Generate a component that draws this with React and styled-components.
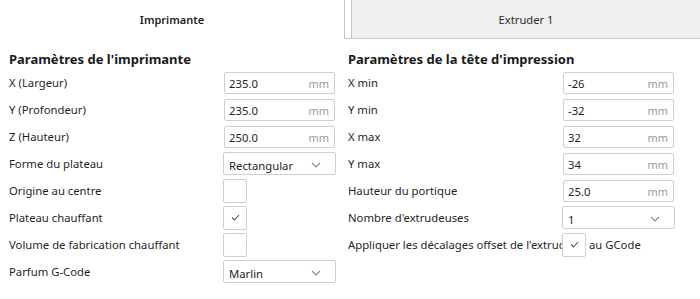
import React from "react";
import styled, { createGlobalStyle } from "styled-components";

const Global = createGlobalStyle`
  html, body {
    margin: 0;
    padding: 0;
    background: #ffffff;
  }
  body {
    font-family: "Noto Sans", "Open Sans", sans-serif;
    color: #1f1f1f;
    width: 700px;
    height: 299px;
    overflow: hidden;
  }
`;

function Chevron() {
  return (
    <svg width="10" height="6" viewBox="0 0 10 6">
      <path d="M1 1 L5 5 L9 1" fill="none" stroke="#8a8a8a" strokeWidth="1.1" />
    </svg>
  );
}

function Check() {
  return (
    <svg width="9" height="7" viewBox="0 0 9 7">
      <path d="M1 3.5 L3.5 6 L8 1" fill="none" stroke="#555" strokeWidth="1.1" />
    </svg>
  );
}

function Field({ value, unit = "mm" }) {
  return (
    <TextBox>
      <Value>{value}</Value>
      <Unit>{unit}</Unit>
    </TextBox>
  );
}

function Select({ value }) {
  return (
    <SelectBox>
      <Value>{value}</Value>
      <Chevron />
    </SelectBox>
  );
}

function Checkbox({ checked }) {
  return <CheckBox>{checked && <Check />}</CheckBox>;
}

const printerRows = [
  ["X (Largeur)", <Field value="235.0" />],
  ["Y (Profondeur)", <Field value="235.0" />],
  ["Z (Hauteur)", <Field value="250.0" />],
  ["Forme du plateau", <Select value="Rectangular" />],
  ["Origine au centre", <Checkbox />],
  ["Plateau chauffant", <Checkbox checked />],
  ["Volume de fabrication chauffant", <Checkbox />],
  ["Parfum G-Code", <Select value="Marlin" />],
];

const headRows = [
  ["X min", <Field value="-26" />],
  ["Y min", <Field value="-32" />],
  ["X max", <Field value="32" />],
  ["Y max", <Field value="34" />],
  ["Hauteur du portique", <Field value="25.0" />],
  ["Nombre d'extrudeuses", <Select value="1" />],
];

export default function App() {
  return (
    <>
      <Global />
      <Page>
        <Tabs>
          <ActiveTab>Imprimante</ActiveTab>
          <TabGap />
          <Tab>Extruder 1</Tab>
        </Tabs>
        <Columns>
          <Column>
            <Heading>Paramètres de l'imprimante</Heading>
            {printerRows.map(([label, control]) => (
              <Row key={label}>
                <Label>{label}</Label>
                {control}
              </Row>
            ))}
          </Column>
          <Column>
            <Heading>Paramètres de la tête d'impression</Heading>
            {headRows.map(([label, control]) => (
              <Row key={label}>
                <Label>{label}</Label>
                {control}
              </Row>
            ))}
            <Row>
              <Label>Appliquer les décalages offset de l'extrudeuse</Label>
              <Checkbox checked />
              <After>au GCode</After>
            </Row>
          </Column>
        </Columns>
      </Page>
    </>
  );
}

const Page = styled.div`
  width: 700px;
  height: 299px;
  display: flex;
  flex-direction: column;
`;

const Tabs = styled.div`
  height: 39px;
  display: flex;
  flex-shrink: 0;
`;

const ActiveTab = styled.div`
  width: 345px;
  border-right: 1px solid #c9c9c9;
  display: flex;
  align-items: center;
  justify-content: center;
  font-size: 11px;
  font-weight: 600;
  padding-bottom: 1px;
  box-sizing: border-box;
`;

const TabGap = styled.div`
  width: 6px;
  border-bottom: 1px solid #c9c9c9;
`;

const Tab = styled.div`
  flex: 1;
  background: #f0f0f0;
  border-left: 1px solid #c9c9c9;
  border-bottom: 1px solid #c9c9c9;
  display: flex;
  align-items: center;
  justify-content: center;
  font-size: 11.2px;
  color: #2a2a2a;
`;

const Columns = styled.div`
  display: grid;
  grid-template-columns: 339px 1fr;
  padding-top: 11px;
`;

const Column = styled.div`
  padding-left: 9px;
  display: flex;
  flex-direction: column;
`;

const Heading = styled.div`
  font-size: 13px;
  font-weight: 700;
  color: #1a1a1a;
  height: 19px;
  line-height: 19px;
`;

const Row = styled.div`
  height: 27px;
  display: flex;
  align-items: center;
`;

const Label = styled.div`
  width: 214px;
  flex-shrink: 0;
  font-size: 11.3px;
  white-space: nowrap;
  overflow: hidden;
  color: #1f1f1f;
`;

const TextBox = styled.div`
  width: 111px;
  height: 22px;
  box-sizing: border-box;
  border: 1px solid #cfcfcf;
  border-radius: 2px;
  display: flex;
  align-items: center;
  justify-content: space-between;
  padding: 2px 5px 0 4px;
  margin-left: 1px;
`;

const SelectBox = styled.div`
  width: 113px;
  height: 23px;
  box-sizing: border-box;
  border: 1px solid #cfcfcf;
  border-radius: 2px;
  display: flex;
  align-items: center;
  justify-content: space-between;
  padding: 3px 14px 0 5px;
`;

const Value = styled.span`
  font-size: 11.3px;
  color: #1f1f1f;
`;

const Unit = styled.span`
  font-size: 11px;
  color: #9a9a9a;
`;

const CheckBox = styled.div`
  width: 24px;
  height: 24px;
  box-sizing: border-box;
  border: 1px solid #cfcfcf;
  border-radius: 2px;
  display: flex;
  align-items: center;
  justify-content: center;
`;

const After = styled.span`
  font-size: 11.3px;
  margin-left: 3px;
`;
